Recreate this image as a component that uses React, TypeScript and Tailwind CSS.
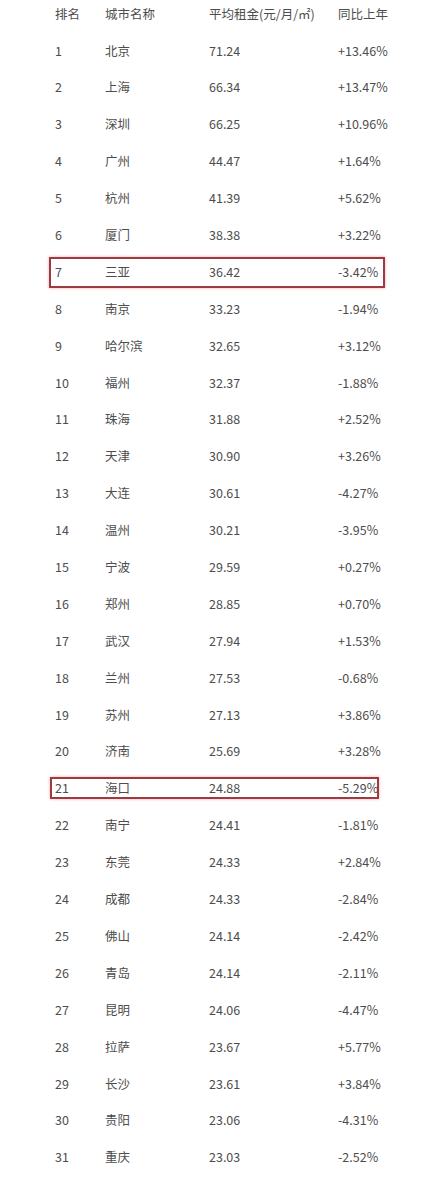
import React from "react";

const rows: [string, string, string, string][] = [
  ["1", "北京", "71.24", "+13.46%"],
  ["2", "上海", "66.34", "+13.47%"],
  ["3", "深圳", "66.25", "+10.96%"],
  ["4", "广州", "44.47", "+1.64%"],
  ["5", "杭州", "41.39", "+5.62%"],
  ["6", "厦门", "38.38", "+3.22%"],
  ["7", "三亚", "36.42", "-3.42%"],
  ["8", "南京", "33.23", "-1.94%"],
  ["9", "哈尔滨", "32.65", "+3.12%"],
  ["10", "福州", "32.37", "-1.88%"],
  ["11", "珠海", "31.88", "+2.52%"],
  ["12", "天津", "30.90", "+3.26%"],
  ["13", "大连", "30.61", "-4.27%"],
  ["14", "温州", "30.21", "-3.95%"],
  ["15", "宁波", "29.59", "+0.27%"],
  ["16", "郑州", "28.85", "+0.70%"],
  ["17", "武汉", "27.94", "+1.53%"],
  ["18", "兰州", "27.53", "-0.68%"],
  ["19", "苏州", "27.13", "+3.86%"],
  ["20", "济南", "25.69", "+3.28%"],
  ["21", "海口", "24.88", "-5.29%"],
  ["22", "南宁", "24.41", "-1.81%"],
  ["23", "东莞", "24.33", "+2.84%"],
  ["24", "成都", "24.33", "-2.84%"],
  ["25", "佛山", "24.14", "-2.42%"],
  ["26", "青岛", "24.14", "-2.11%"],
  ["27", "昆明", "24.06", "-4.47%"],
  ["28", "拉萨", "23.67", "+5.77%"],
  ["29", "长沙", "23.61", "+3.84%"],
  ["30", "贵阳", "23.06", "-4.31%"],
  ["31", "重庆", "23.03", "-2.52%"],
];

function Cells({ r }: { r: [string, string, string, string] }) {
  return (
    <>
      <div className="w-[50px]">{r[0]}</div>
      <div className="w-[104px]">{r[1]}</div>
      <div className="w-[129px]">{r[2]}</div>
      <div>{r[3]}</div>
    </>
  );
}

export default function App() {
  return (
    <div
      className="w-[440px] h-[1185px] bg-white text-[#4d4d4d] text-[12.5px] overflow-hidden"
      style={{ fontFamily: '"Noto Sans CJK SC", "Noto Sans", sans-serif' }}
    >
      <div className="flex items-center h-[28px] pl-[55px]">
        <Cells r={["排名", "城市名称", "平均租金(元/月/㎡)", "同比上年"]} />
      </div>
      <div className="mt-[4.5px]">
        {rows.map((r) => (
          <div key={r[0]} className="relative flex items-center h-[36.9px] pl-[55px]">
            <Cells r={r} />
            {r[0] === "7" && (
              <div className="absolute left-[49px] top-[3px] w-[336px] h-[31px] border-2 border-[#9c3a42] shadow-[0_0_3px_#f3a5a5]" />
            )}
            {r[0] === "21" && (
              <div className="absolute left-[50px] top-[7px] w-[329px] h-[22px] border-2 border-[#9c3a42] shadow-[0_0_3px_#f3a5a5]" />
            )}
          </div>
        ))}
      </div>
    </div>
  );
}
